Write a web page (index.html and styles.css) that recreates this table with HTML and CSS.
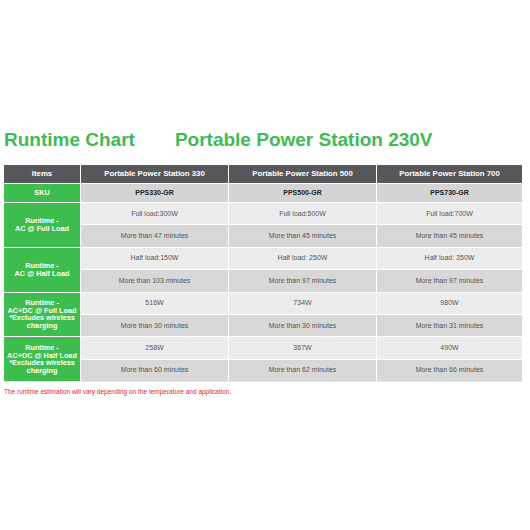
FILE: index.html
```html
<!DOCTYPE html>
<html>
<head>
<meta charset="utf-8">
<link rel="stylesheet" href="styles.css">
</head>
<body>
<div class="page">
  <h1 class="title"><span>Runtime Chart</span><span>Portable Power Station 230V</span></h1>
  <div class="chart">
    <div class="hd">Items</div>
    <div class="hd">Portable Power Station 330</div>
    <div class="hd">Portable Power Station 500</div>
    <div class="hd">Portable Power Station 700</div>

    <div class="lbl">SKU</div>
    <div class="sku">PPS330-GR</div>
    <div class="sku">PPS500-GR</div>
    <div class="sku">PPS730-GR</div>

    <div class="lbl span2">Runtime -<br>AC @ Full Load</div>
    <div class="c l">Full load:300W</div>
    <div class="c l">Full load:500W</div>
    <div class="c l">Full load:700W</div>
    <div class="c d">More than 47 minutes</div>
    <div class="c d">More than 45 minutes</div>
    <div class="c d">More than 45 minutes</div>

    <div class="lbl span2">Runtime -<br>AC @ Half Load</div>
    <div class="c l">Half load:150W</div>
    <div class="c l">Half load: 250W</div>
    <div class="c l">Half load: 350W</div>
    <div class="c d">More than 103 minutes</div>
    <div class="c d">More than 97 minutes</div>
    <div class="c d">More than 97 minutes</div>

    <div class="lbl span2">Runtime -<br>AC+DC @ Full Load<br>*Excludes wireless<br>charging</div>
    <div class="c l">516W</div>
    <div class="c l">734W</div>
    <div class="c l">980W</div>
    <div class="c d">More than 30 minutes</div>
    <div class="c d">More than 30 minutes</div>
    <div class="c d">More than 31 minutes</div>

    <div class="lbl span2">Runtime -<br>AC+DC @ Half Load<br>*Excludes wireless<br>charging</div>
    <div class="c l">258W</div>
    <div class="c l">367W</div>
    <div class="c l">490W</div>
    <div class="c d">More than 60 minutes</div>
    <div class="c d">More than 62 minutes</div>
    <div class="c d">More than 66 minutes</div>
  </div>
  <p class="note">The runtime estimation will vary depending on the temperature and application.</p>
</div>
</body>
</html>
```
FILE: styles.css
```css
html, body {
  margin: 0;
  padding: 0;
  background: #ffffff;
}
.page {
  width: 530px;
  height: 530px;
  padding: 0 0 0 4px;
  box-sizing: border-box;
  font-family: "Liberation Sans", Arial, sans-serif;
}
.title {
  margin: 0;
  padding-top: 129px;
  height: 36px;
  box-sizing: content-box;
  display: flex;
  gap: 40px;
  font-size: 19px;
  line-height: 22px;
  font-weight: bold;
  color: #3fba55;
  white-space: nowrap;
}
.chart {
  width: 518px;
  display: grid;
  grid-template-columns: 76px 147px 147px 145px;
  grid-template-rows: 18px 18px repeat(8, 21.4px);
  column-gap: 1px;
  row-gap: 1px;
  background: #ffffff;
  font-size: 7px;
  line-height: 8px;
  border-bottom: 1px solid #e4e4e4;
}
.chart > div {
  display: flex;
  align-items: center;
  justify-content: center;
  text-align: center;
}
.hd {
  background: #58585c;
  color: #ffffff;
  font-weight: bold;
  font-size: 7.8px;
}
.lbl {
  background: #3cbd4e;
  color: #ffffff;
  font-weight: bold;
  font-size: 7.3px;
  line-height: 7.7px;
}
.span2 {
  grid-row: span 2;
}
.sku {
  background: #d4d4d4;
  color: #222222;
  font-weight: bold;
}
.c {
  color: #555555;
}
.l {
  background: #ececec;
}
.d {
  background: #d8d8d8;
}
.note {
  margin: 6px 0 0;
  font-size: 6.5px;
  line-height: 8px;
  color: #e02828;
}
```
